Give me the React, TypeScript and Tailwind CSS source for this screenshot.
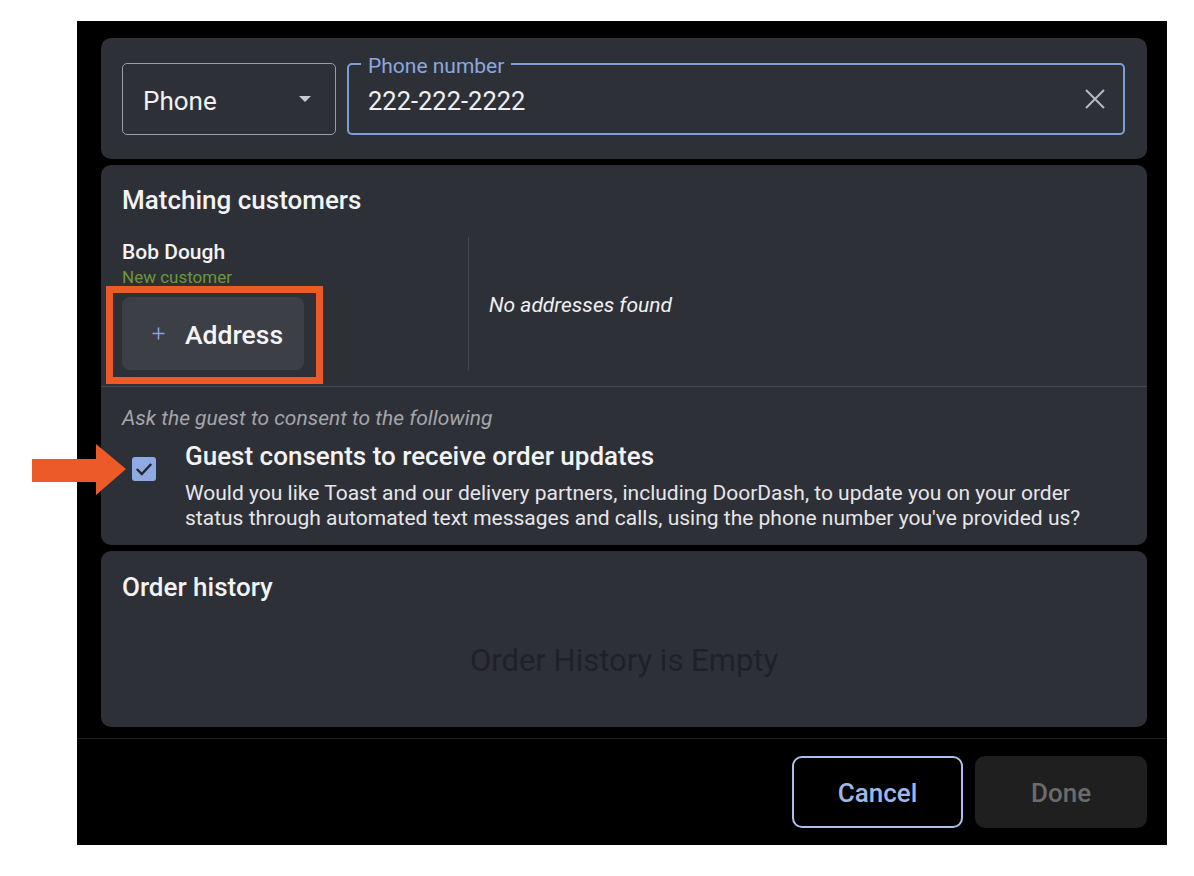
import React from "react";

export default function App() {
  const font = { fontFamily: "Roboto, 'Noto Sans', sans-serif" };
  return (
    <div className="w-[1194px] h-[876px] bg-white relative overflow-hidden" style={font}>
      <div className="absolute left-[77px] top-[21px] w-[1090px] h-[824px] bg-black flex flex-col">
        <div className="flex flex-col gap-[6px] pl-[24px] pr-[20px] pt-[17px]">
          {/* Card 1 */}
          <div className="h-[121px] rounded-[10px] bg-[#2e3038] flex items-start pt-[25px] pl-[21px] pr-[22px] gap-[11px]">
            <div className="w-[214px] h-[72px] rounded-[5px] border border-[#9a9ca2] flex items-center justify-between pl-[20px] pr-[24px]">
              <span className="text-[26px] leading-[30px] text-[#f1f1f1] mt-[3px]">Phone</span>
              <svg width="12" height="6" viewBox="0 0 12 6">
                <polygon points="0,0 12,0 6,6" fill="#c9cacd" />
              </svg>
            </div>
            <div className="relative flex-1 h-[72px] rounded-[5px] border-2 border-[#7d9fd6] flex items-center justify-between pl-[19px] pr-[17px]">
              <span className="absolute left-[12px] top-[-11px] bg-[#2e3038] px-[7px] text-[21px] leading-[24px] text-[#8aa8df]">
                Phone number
              </span>
              <span className="text-[25.5px] leading-[30px] text-[#f1f1f1] mt-[3px]">222-222-2222</span>
              <svg width="22" height="22" viewBox="0 0 22 22">
                <path d="M2 2 L20 20 M20 2 L2 20" stroke="#b8b9bd" strokeWidth="2" fill="none" />
              </svg>
            </div>
          </div>

          {/* Card 2 */}
          <div className="h-[380px] rounded-[10px] bg-[#2e3038] flex flex-col pt-[20px]">
            <div className="pl-[21px] text-[26px] leading-[30px] font-medium text-[#f3f3f3]">Matching customers</div>
            <div className="mt-[22px] flex h-[133px]">
              <div className="w-[346px] ml-[21px] pt-[3px] flex flex-col">
                <div className="text-[21px] leading-[24px] font-medium text-[#f3f3f3]">Bob Dough</div>
                <div className="text-[17px] leading-[20px] mt-[3px] text-[#6a9838]">New customer</div>
                <div className="mt-[10px] w-[182px] h-[73px] rounded-[8px] bg-[#3d3f47] flex items-center pl-[30px]">
                  <svg width="13" height="13" viewBox="0 0 13 13">
                    <path d="M6.5 0.5 V12.5 M0.5 6.5 H12.5" stroke="#8aa6dc" strokeWidth="1.5" fill="none" />
                  </svg>
                  <span className="ml-[20px] text-[26.5px] leading-[30px] font-medium text-[#f5f5f5] mt-[2px]">Address</span>
                </div>
              </div>
              <div className="w-px bg-[#474950]" />
              <div className="flex items-center pl-[20px]">
                <span className="italic text-[21px] leading-[24px] text-[#f1f1f1] mt-[3px]">No addresses found</span>
              </div>
            </div>
            <div className="mt-[16px] h-px bg-[#474950]" />
            <div className="pl-[21px] mt-[19px] italic text-[21px] leading-[24px] text-[#a4a5aa]">
              Ask the guest to consent to the following
            </div>
            <div className="flex pl-[31px] mt-[11px]">
              <div className="w-[24px] h-[24px] mt-[16px] rounded-[3px] bg-[#8faae3] flex items-center justify-center">
                <svg width="18" height="14" viewBox="0 0 18 14">
                  <path d="M1.8 7 L6.8 12 L16.2 2" stroke="#23262e" strokeWidth="2.4" fill="none" />
                </svg>
              </div>
              <div className="ml-[29px] flex flex-col">
                <div className="text-[26px] leading-[30px] font-medium text-[#f3f3f3]">
                  Guest consents to receive order updates
                </div>
                <div className="mt-[10px] text-[21px] leading-[25px] text-[#e6e6e8]">
                  <div className="whitespace-nowrap">
                    Would you like Toast and our delivery partners, including DoorDash, to update you on your order
                  </div>
                  <div className="whitespace-nowrap">
                    status through automated text messages and calls, using the phone number you've provided us?
                  </div>
                </div>
              </div>
            </div>
          </div>

          {/* Card 3 */}
          <div className="h-[176px] rounded-[10px] bg-[#2e3038] flex flex-col pt-[21px]">
            <div className="pl-[21px] text-[26px] leading-[30px] font-medium text-[#f3f3f3]">Order history</div>
            <div className="mt-[41px] text-center text-[31px] leading-[36px] text-[#1f2127]">Order History is Empty</div>
          </div>
        </div>

        <div className="mt-[11px] h-px bg-[#1f1f1f]" />
        <div className="flex justify-end gap-[12px] pr-[20px] pt-[17px]">
          <div className="w-[171px] h-[72px] rounded-[10px] border-2 border-[#a9c0ec] flex items-center justify-center pt-[3px] text-[26px] font-medium text-[#9fb7e8]">
            Cancel
          </div>
          <div className="w-[172px] h-[72px] rounded-[10px] bg-[#1f1f1f] flex items-center justify-center pt-[3px] text-[26px] font-medium text-[#6b6b6b]">
            Done
          </div>
        </div>
      </div>

      {/* Orange arrow annotation */}
      <svg className="absolute left-[32px] top-[444px]" width="94" height="52" viewBox="0 0 94 52">
        <polygon points="0,15 64,15 64,0 94,25 64,51 64,38 0,38" fill="#ec5a28" />
      </svg>

      {/* Orange highlight rectangle annotation */}
      <div className="absolute left-[106px] top-[286px] w-[217px] h-[98px] border-[7px] border-[#ec5a28]" />
    </div>
  );
}
